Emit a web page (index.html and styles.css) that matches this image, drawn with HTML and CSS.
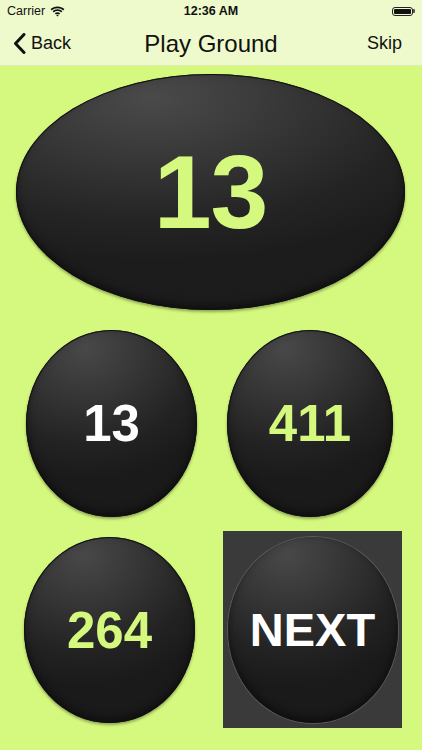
FILE: index.html
```html
<!DOCTYPE html>
<html lang="en">
<head>
    <meta charset="UTF-8">
    <meta name="viewport" content="width=device-width, initial-scale=1.0">
    <title>Play Ground</title>
    <link rel="stylesheet" href="styles.css">
</head>
<body>
    <div class="status-bar">
        <div class="carrier">
            Carrier
            <svg class="wifi" width="15" height="11" viewBox="0 0 15 11">
                <path d="M7.5 2.2c2.2 0 4.2.8 5.7 2.2l1.2-1.3C12.6 1.4 10.2.4 7.5.4S2.4 1.4.6 3.1l1.2 1.3c1.5-1.4 3.5-2.2 5.7-2.2z" fill="#111"/>
                <path d="M7.5 5.1c1.4 0 2.6.5 3.6 1.4l1.2-1.3C11 4 9.3 3.3 7.5 3.3S4 4 2.7 5.2l1.2 1.3c1-.9 2.2-1.4 3.6-1.4z" fill="#111"/>
                <path d="M7.5 8c.6 0 1.1.2 1.5.6l1.2-1.3c-.7-.7-1.7-1.1-2.7-1.1s-2 .4-2.7 1.1L6 8.6c.4-.4.9-.6 1.5-.6z" fill="#111"/>
                <path d="M7.5 10.6l1.2-1.3c-.3-.3-.7-.5-1.2-.5s-.9.2-1.2.5z" fill="#111"/>
            </svg>
        </div>
        <div class="clock">12:36 AM</div>
        <div class="battery">
            <span class="battery-body"><span class="battery-level"></span></span>
            <span class="battery-cap"></span>
        </div>
    </div>

    <div class="nav-bar">
        <a class="nav-back" href="#">
            <svg width="13" height="21" viewBox="0 0 13 21">
                <path d="M11 1.5 2.5 10.5 11 19.5" fill="none" stroke="#111" stroke-width="3" stroke-linecap="round" stroke-linejoin="round"/>
            </svg>
            Back
        </a>
        <div class="nav-title">Play Ground</div>
        <a class="nav-skip" href="#">Skip</a>
    </div>

    <main class="board">
        <div class="target">
            <span class="target-value">13</span>
        </div>

        <div class="choices">
            <button class="choice choice-a"><span class="value white">13</span></button>
            <button class="choice choice-b"><span class="value lime">411</span></button>
            <button class="choice choice-c"><span class="value lime">264</span></button>
            <div class="next-frame">
                <button class="choice next-button"><span class="value white">NEXT</span></button>
            </div>
        </div>
    </main>
</body>
</html>
```

FILE: styles.css
```css
body {
    margin: 0;
    width: 422px;
    height: 750px;
    overflow: hidden;
    background-color: #d5f97e;
    font-family: "Liberation Sans", Arial, sans-serif;
    color: #111;
}

/* top status strip + nav share the pale tint */
.status-bar {
    height: 22px;
    background-color: #eef9cc;
    display: flex;
    align-items: center;
    justify-content: space-between;
    padding: 0 7px;
    font-size: 12.5px;
    position: relative;
}
.carrier {
    display: flex;
    align-items: center;
    gap: 5px;
}
.clock {
    position: absolute;
    left: 0;
    right: 0;
    text-align: center;
    font-weight: bold;
    font-size: 12.5px;
}
.battery {
    display: flex;
    align-items: center;
}
.battery-body {
    width: 21px;
    height: 9px;
    border: 1px solid #222;
    border-radius: 3px;
    padding: 1px;
    box-sizing: border-box;
    display: flex;
}
.battery-level {
    flex: 1;
    background-color: #111;
    border-radius: 1px;
}
.battery-cap {
    width: 2px;
    height: 4px;
    background-color: #555;
    border-radius: 0 1px 1px 0;
}

.nav-bar {
    height: 43px;
    background-color: #eef9cc;
    border-bottom: 1px solid #dfeeb0;
    display: flex;
    align-items: center;
    justify-content: space-between;
    padding: 0 20px 0 13px;
    position: relative;
}
.nav-bar a {
    color: #111;
    text-decoration: none;
    font-size: 18px;
}
.nav-back {
    display: flex;
    align-items: center;
    gap: 5px;
}
.nav-title {
    position: absolute;
    left: 0;
    right: 0;
    text-align: center;
    font-size: 24px;
    pointer-events: none;
}

.board {
    padding-top: 8px;
}

.target {
    width: 389px;
    height: 236px;
    margin-left: 16px;
    border-radius: 50%;
    display: flex;
    align-items: center;
    justify-content: center;
    background: radial-gradient(ellipse 90% 70% at 35% 10%, #4a4a4a 0%, #363636 40%, #242424 75%, #1c1c1c 100%);
    box-shadow: inset 0 0 0 1px #111, inset 0 -4px 8px rgba(0, 0, 0, 0.5), 0 2px 3px rgba(0, 0, 0, 0.35);
}
.target-value {
    font-size: 104px;
    font-weight: bold;
    color: #d5f97e;
    letter-spacing: -1px;
}

.choices {
    display: grid;
    grid-template-columns: 179px 181px;
    column-gap: 22px;
    margin-top: 20px;
    padding-left: 22px;
}

.choice {
    border: none;
    padding: 0;
    border-radius: 50%;
    display: flex;
    align-items: center;
    justify-content: center;
    font-family: inherit;
    background: radial-gradient(ellipse 90% 70% at 35% 10%, #484848 0%, #343434 40%, #222 75%, #1a1a1a 100%);
    box-shadow: inset 0 0 0 1px #111, inset 0 -4px 8px rgba(0, 0, 0, 0.5), 0 2px 3px rgba(0, 0, 0, 0.35);
    cursor: pointer;
}
.choice-a {
    width: 171px;
    height: 187px;
    margin-left: 4px;
}
.choice-b {
    width: 166px;
    height: 187px;
    margin-left: 4px;
}
.choice-c {
    width: 171px;
    height: 186px;
    margin-left: 2px;
    margin-top: 20px;
}

.next-frame {
    width: 179px;
    height: 197px;
    margin-top: 14px;
    background-color: #3a3a3a;
    display: flex;
    align-items: center;
    justify-content: center;
}
.next-button {
    width: 170px;
    height: 186px;
    box-shadow: 0 0 0 1px #5a5a5a, inset 0 -4px 8px rgba(0, 0, 0, 0.5);
}

.value {
    font-weight: bold;
    font-size: 51px;
}
.white {
    color: #fff;
}
.lime {
    color: #d5f97e;
}
.next-button .value {
    font-size: 47px;
}
```
